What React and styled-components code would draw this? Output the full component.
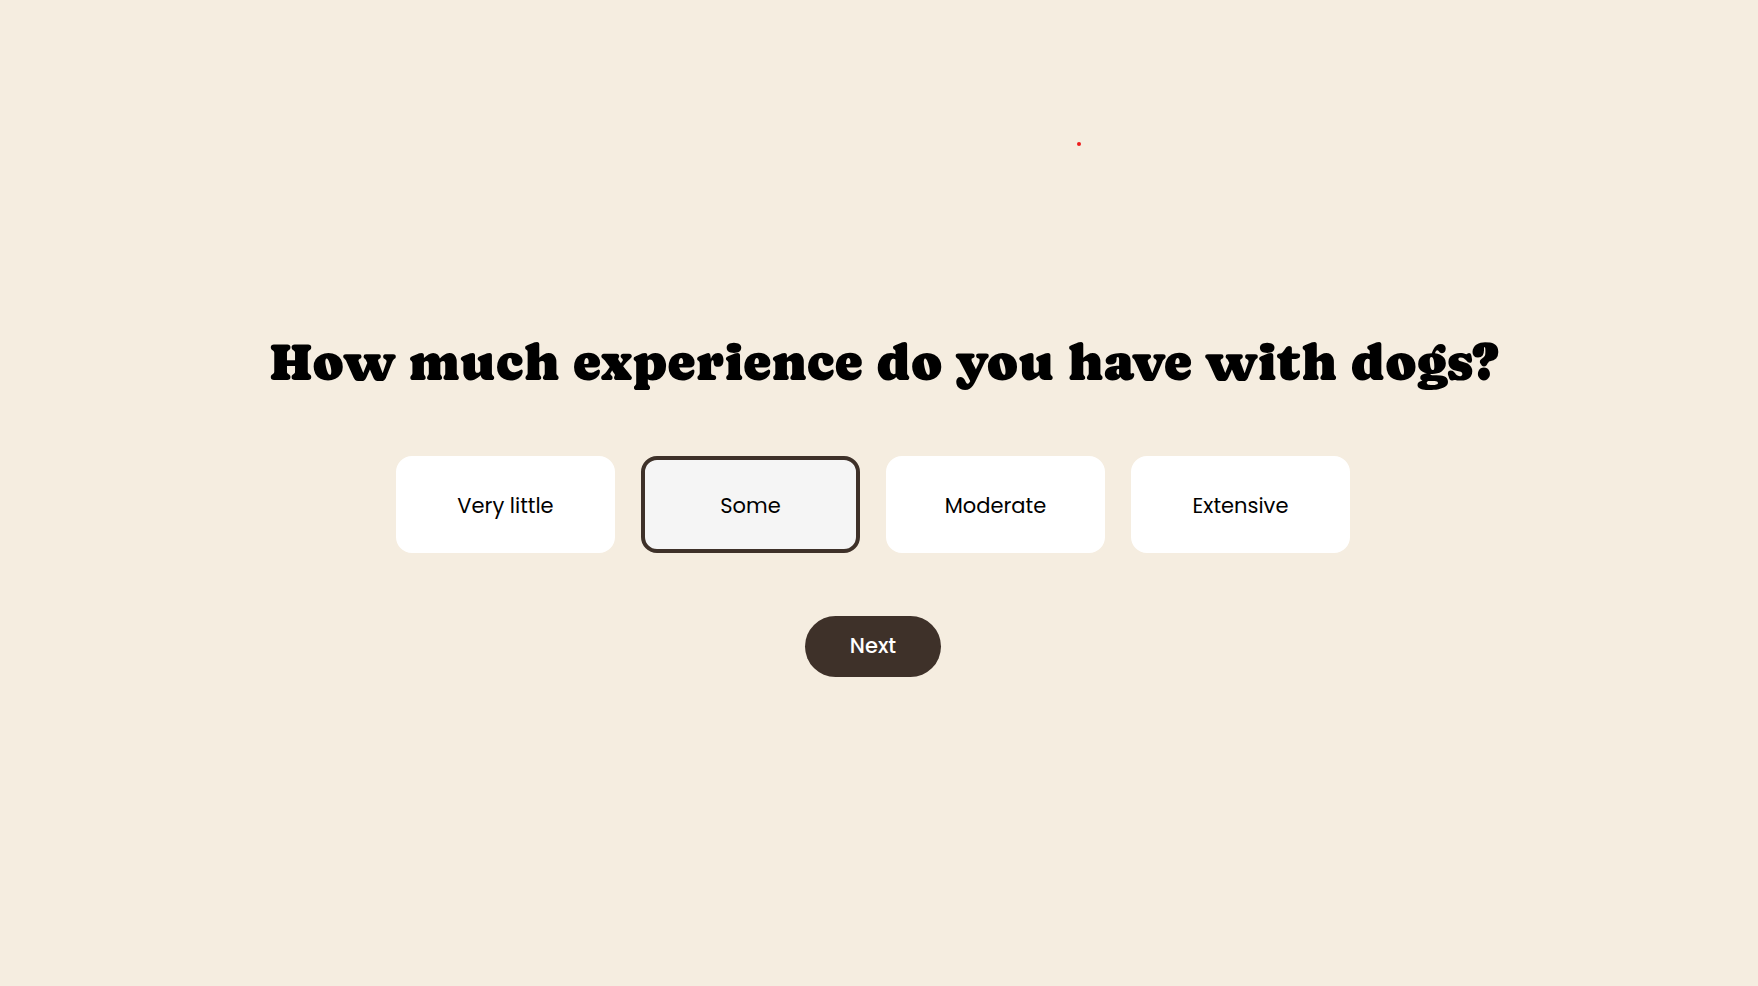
import React, { useState } from "react";
import styled, { createGlobalStyle } from "styled-components";

const GlobalStyle = createGlobalStyle`
  *, *::before, *::after {
    box-sizing: border-box;
  }
  body {
    margin: 0;
    background: #f5ede0;
    color: #000;
    font-family: Poppins, Inter, sans-serif;
  }
`;

const Page = styled.main`
  position: relative;
  display: flex;
  flex-direction: column;
  align-items: center;
  justify-content: center;
  min-height: 100vh;
  padding: 20px 12px 0 0;
`;

const Quiz = styled.form`
  display: flex;
  flex-direction: column;
  align-items: center;
  gap: 63px;
`;

const Question = styled.h1`
  margin: 0;
  padding: 2px 0 0 22px;
  font-family: Caprasimo, "DejaVu Serif", serif;
  font-size: 53px;
  font-weight: 400;
  line-height: 62px;
  text-align: center;
`;

const Options = styled.fieldset`
  display: flex;
  flex-wrap: wrap;
  justify-content: center;
  gap: 26px;
  margin: 0;
  padding: 0;
  border: 0;
`;

const HiddenRadio = styled.input`
  position: absolute;
  opacity: 0;
  pointer-events: none;
`;

const OptionCard = styled.label`
  display: flex;
  align-items: center;
  justify-content: center;
  width: 219px;
  height: 97px;
  padding-top: 2px;
  border: 4px solid ${({ $selected }) => ($selected ? "#3e3129" : "#fff")};
  border-radius: 16px;
  background: ${({ $selected }) => ($selected ? "#f5f5f5" : "#fff")};
  font-size: 21px;
  line-height: 32px;
  cursor: pointer;
`;

const NextButton = styled.button`
  padding: 14px 45px 15px;
  border: 0;
  border-radius: 32px;
  background: #3e3129;
  color: #fff;
  font-family: inherit;
  font-size: 21px;
  font-weight: 500;
  line-height: 32px;
  cursor: pointer;
`;

const Dot = styled.span`
  position: absolute;
  top: 142px;
  left: 1077px;
  width: 4px;
  height: 4px;
  border-radius: 50%;
  background: #ee1c1c;
`;

const choices = ["Very little", "Some", "Moderate", "Extensive"];

export default function App() {
  const [selected, setSelected] = useState("Some");

  return (
    <>
      <GlobalStyle />
      <Page>
        <Quiz onSubmit={(event) => event.preventDefault()}>
          <Question id="question">How much experience do you have with dogs?</Question>
          <Options aria-labelledby="question">
            {choices.map((choice) => (
              <OptionCard key={choice} $selected={choice === selected}>
                <HiddenRadio
                  type="radio"
                  name="experience"
                  value={choice}
                  checked={choice === selected}
                  onChange={() => setSelected(choice)}
                />
                {choice}
              </OptionCard>
            ))}
          </Options>
          <NextButton type="submit">Next</NextButton>
        </Quiz>
        <Dot aria-hidden="true" />
      </Page>
    </>
  );
}
